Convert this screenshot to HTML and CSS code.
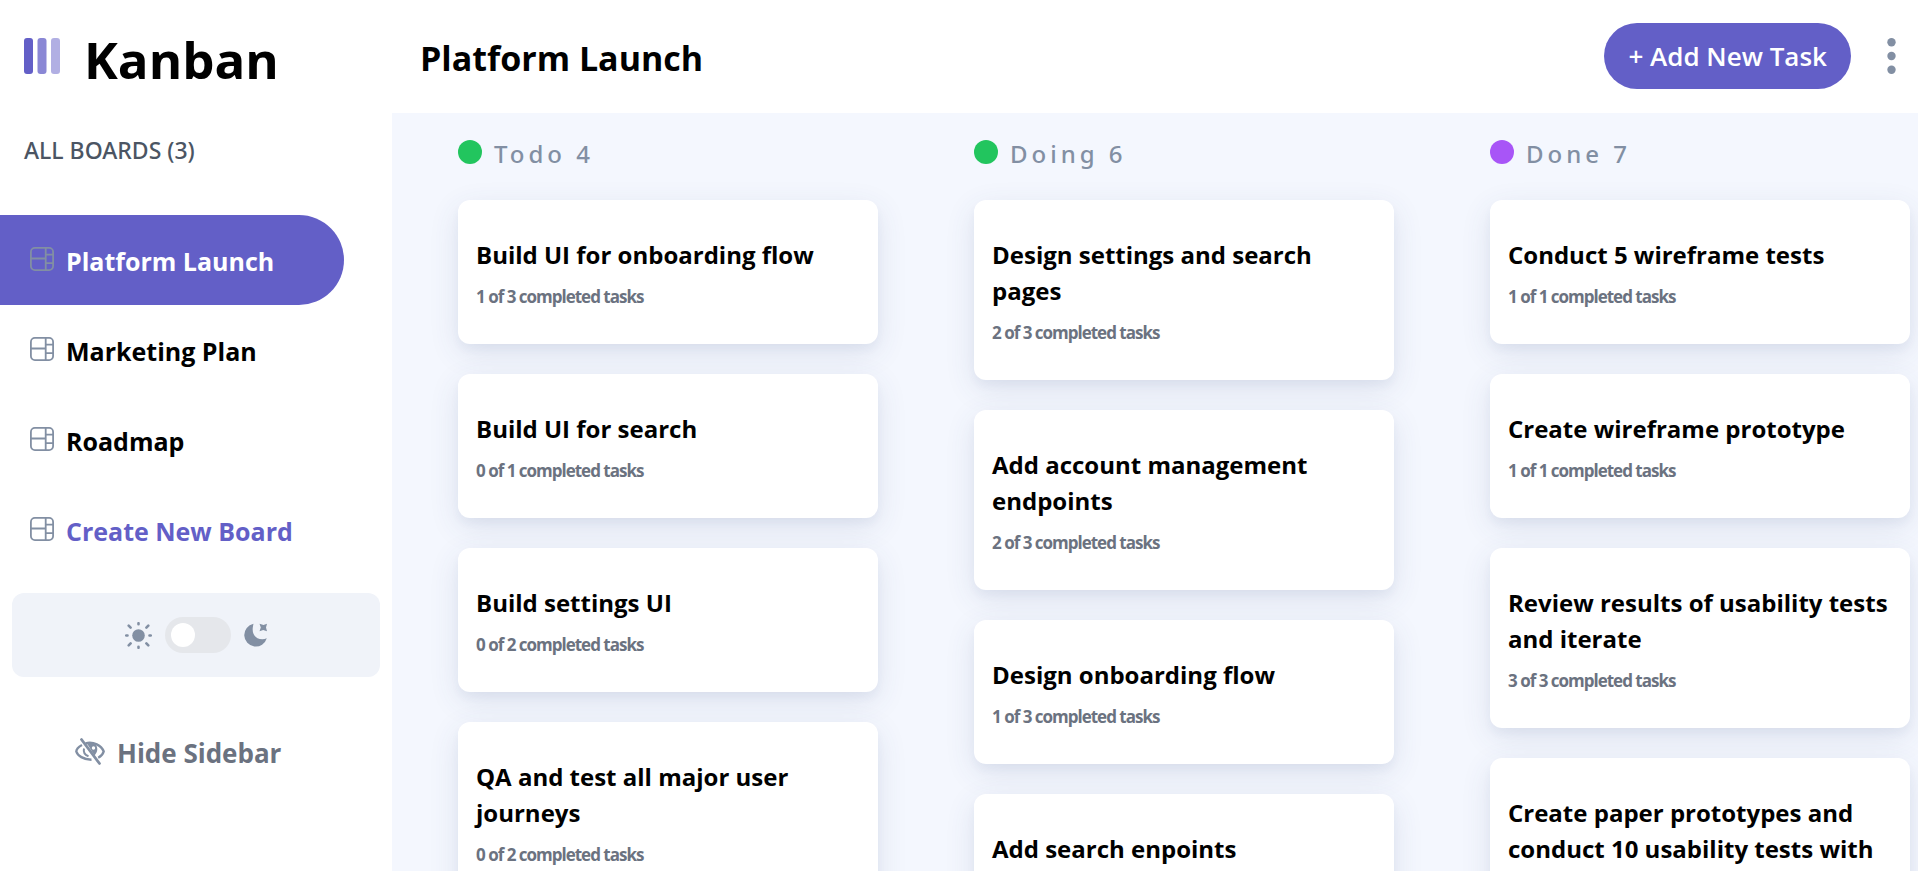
FILE: index.html
```html
<!DOCTYPE html>
<html lang="en">
<head>
<meta charset="utf-8">
<title>Kanban</title>
<link rel="stylesheet" href="styles.css">
</head>
<body>
<svg class="sprite" width="0" height="0" aria-hidden="true">
  <symbol id="board" viewBox="0 0 24 24">
    <g fill="none" stroke="currentColor" stroke-width="1.8">
      <rect x="0.9" y="0.9" width="22.2" height="22.2" rx="4"/>
      <path d="M15.7 1v22M1 11.5h14.7M15.7 7.6h7.3M15.7 16.2h7.3"/>
    </g>
  </symbol>
</svg>
<div class="app">
  <aside class="sidebar">
    <div class="brand">
      <svg class="logo" width="36" height="36" viewBox="0 0 36 36" aria-hidden="true" fill="#635fc7">
        <rect width="9" height="36" rx="3"/>
        <rect x="13.500" width="9" height="36" rx="3" opacity=".75"/>
        <rect x="27" width="9" height="36" rx="3" opacity=".5"/>
      </svg>
      <h1 class="brand-name">Kanban</h1>
    </div>
    <p class="boards-label">ALL BOARDS (3)</p>
    <nav class="boards">
      <a class="board active" href="#"><svg class="board-icon" aria-hidden="true"><use href="#board"/></svg>Platform Launch</a>
      <a class="board" href="#"><svg class="board-icon" aria-hidden="true"><use href="#board"/></svg>Marketing Plan</a>
      <a class="board" href="#"><svg class="board-icon" aria-hidden="true"><use href="#board"/></svg>Roadmap</a>
      <button class="board create" type="button"><svg class="board-icon" aria-hidden="true"><use href="#board"/></svg>Create New Board</button>
    </nav>
    <div class="theme">
      <svg width="27" height="27" viewBox="0 0 27 27" aria-hidden="true">
        <circle cx="13.500" cy="13.500" r="6.300" fill="currentColor"/>
        <path d="M13.500 1.200v1.100M13.500 24.700v1.100M1.200 13.500h1.300M24.500 13.500h1.300M3.700 3.700l1.900 1.900M21.400 21.400l1.900 1.900M3.700 23.300l1.900-1.900M21.400 5.600l1.900-1.900" stroke="currentColor" stroke-width="2.600" stroke-linecap="round"/>
      </svg>
      <input class="switch" type="checkbox" role="switch" aria-label="Dark theme">
      <svg width="24" height="24" viewBox="0 0 24 24" aria-hidden="true" fill="currentColor">
        <path d="M9.500.8A11.500 11.500 0 1 0 22.800 15.300C16 18.500 7.500 14 8.800 4.500 9 3 9.200 2 9.500.8z"/>
        <path d="M15.500.8l4 1.200L23 .8l-1 3.700 1 3.700-3.800-1.200-3.700 1.200 1.300-3.700z"/>
      </svg>
    </div>
    <button class="hide" type="button">
      <svg width="30" height="27" viewBox="0 0 30 27" aria-hidden="true">
        <path d="M7 7C3.500 8.800 1.400 11.500 1.300 13.500 2.500 17.500 8.500 21.800 16.500 21.700M10.500 5.300C18.500 3.200 26.500 7.500 28.700 13.500c-.7 2.500-2.500 4.800-5.500 6.300" fill="none" stroke="currentColor" stroke-width="2.400"/>
        <path d="M9 10.500c-.8 3.500 1 6.500 4.500 7.800" fill="none" stroke="currentColor" stroke-width="2"/>
        <path d="M11.500 4.800c3-.8 6.500-.3 9 1.500 2.500 3.200 2.500 7.500-1 11.200z" fill="currentColor"/>
        <circle cx="18.500" cy="10" r="1.700" fill="#fff"/>
        <path d="M6.500 1.500l18 24" stroke="currentColor" stroke-width="2.800" stroke-linecap="round"/>
      </svg>
      <span>Hide Sidebar</span>
    </button>
  </aside>
  <div class="content">
    <header class="topbar">
      <h2 class="board-title">Platform Launch</h2>
      <button class="add" type="button">+ Add New Task</button>
      <button class="more" type="button" aria-label="Board options">
        <svg width="9" height="36" viewBox="0 0 9 36" aria-hidden="true" fill="currentColor"><circle cx="4.500" cy="4.200" r="4.200"/><circle cx="4.500" cy="18" r="4.200"/><circle cx="4.500" cy="31.800" r="4.200"/></svg>
      </button>
    </header>
    <main class="columns">
      <section class="column">
        <h3 class="column-head"><span class="dot green"></span>Todo 4</h3>
        <article class="card"><h4>Build UI for onboarding flow</h4><p>1 of 3 completed tasks</p></article>
        <article class="card"><h4>Build UI for search</h4><p>0 of 1 completed tasks</p></article>
        <article class="card"><h4>Build settings UI</h4><p>0 of 2 completed tasks</p></article>
        <article class="card"><h4>QA and test all major user journeys</h4><p>0 of 2 completed tasks</p></article>
      </section>
      <section class="column">
        <h3 class="column-head"><span class="dot green"></span>Doing 6</h3>
        <article class="card"><h4>Design settings and search pages</h4><p>2 of 3 completed tasks</p></article>
        <article class="card"><h4>Add account management endpoints</h4><p>2 of 3 completed tasks</p></article>
        <article class="card"><h4>Design onboarding flow</h4><p>1 of 3 completed tasks</p></article>
        <article class="card"><h4>Add search enpoints</h4></article>
      </section>
      <section class="column">
        <h3 class="column-head"><span class="dot purple"></span>Done 7</h3>
        <article class="card"><h4>Conduct 5 wireframe tests</h4><p>1 of 1 completed tasks</p></article>
        <article class="card"><h4>Create wireframe prototype</h4><p>1 of 1 completed tasks</p></article>
        <article class="card"><h4>Review results of usability tests and iterate</h4><p>3 of 3 completed tasks</p></article>
        <article class="card"><h4>Create paper prototypes and conduct 10 usability tests with</h4></article>
      </section>
    </main>
  </div>
</div>
</body>
</html>
```
FILE: styles.css
```css
* { box-sizing: border-box; margin: 0; }

body {
  font-family: "Open Sans", "Noto Sans", sans-serif;
  font-size: 24px;
  line-height: 36px;
  color: #000;
  background: #fff;
}

button { font: inherit; border: 0; background: none; padding: 0; cursor: pointer; }
a { color: inherit; text-decoration: none; }
svg { flex: none; display: block; }
.sprite { position: absolute; }

.app { display: flex; height: 100vh; overflow: hidden; }

.sidebar { flex: none; width: 392px; display: flex; flex-direction: column; color: #828fa3; }
.brand { display: flex; align-items: flex-start; gap: 24px; padding: 29px 24px 0; height: 113px; }
.logo { margin-top: 9px; }
.brand-name { font-size: 51px; line-height: 60px; font-weight: 700; color: #000; }
.boards-label {
  padding: 19px 24px 47px;
  font-family: "Noto Sans", "Open Sans", sans-serif;
  font-size: 23px;
  font-weight: 500;
  color: #4b5563;
}

.board {
  display: flex;
  align-items: center;
  gap: 12px;
  width: 344px;
  height: 90px;
  padding: 2px 0 0 30px;
  border-radius: 0 45px 45px 0;
  font-size: 25px;
  font-weight: 700;
  color: #000;
}
.board-icon { width: 24px; height: 24px; margin-bottom: 4px; color: #828fa3; }
.active { background: #635fc7; color: #fff; }
.create { color: #635fc7; }

.theme {
  display: flex;
  align-items: center;
  justify-content: center;
  gap: 13px;
  height: 84px;
  margin: 18px 12px 0;
  border-radius: 12px;
  background: #f0f3f9;
}
.switch {
  appearance: none;
  width: 66px;
  height: 36px;
  margin: 0;
  padding: 6px;
  border-radius: 18px;
  background: #e5e7eb;
}
.switch::before { content: ""; display: block; width: 24px; height: 24px; border-radius: 50%; background: #fff; }
.switch:checked { background: #635fc7; }
.switch:checked::before { margin-left: auto; }

.hide {
  display: flex;
  align-items: center;
  gap: 12px;
  margin: 58px 0 0 75px;
  font-size: 26px;
  font-weight: 700;
  color: #6b7280;
}
.hide svg { margin-bottom: 3px; color: #828fa3; }

.content { flex: 1; min-width: 0; display: flex; flex-direction: column; }
.topbar { display: flex; align-items: center; height: 113px; padding: 0 22px 2px 28px; }
.board-title { padding-top: 4px; font-size: 34px; line-height: 42px; font-weight: 700; flex: 1; }
.add {
  height: 66px;
  padding: 0 24px;
  border-radius: 33px;
  background: #635fc7;
  color: #fff;
  font-size: 26px;
  font-weight: 600;
}
.more { margin-left: 36px; color: #828fa3; }

.columns {
  flex: 1;
  min-height: 0;
  display: flex;
  gap: 96px;
  padding: 24px 8px 0 66px;
  background: #f4f7fe;
  overflow: hidden;
}
.column { flex: 1 0 420px; display: flex; flex-direction: column; gap: 30px; }
.column-head {
  display: flex;
  align-items: center;
  gap: 12px;
  height: 33px;
  font-family: "Noto Sans", "Open Sans", sans-serif;
  font-size: 24px;
  font-weight: 500;
  letter-spacing: 4px;
  color: #828fa3;
}
.dot { width: 24px; height: 24px; margin-bottom: 3px; border-radius: 50%; }
.green { background: #22c55e; }
.purple { background: #a855f7; }

.card {
  padding: 37px 18px 34px;
  border-radius: 12px;
  background: #fff;
  box-shadow: 0 6px 9px rgba(54, 78, 126, 0.04), 0 9px 30px rgba(54, 78, 126, 0.12);
}
.card h4 { font-size: 24px; line-height: 36px; font-weight: 700; }
.card p {
  margin-top: 10px;
  font-size: 17px;
  line-height: 27px;
  font-weight: 700;
  letter-spacing: -1px;
  color: #6b7280;
}
```
